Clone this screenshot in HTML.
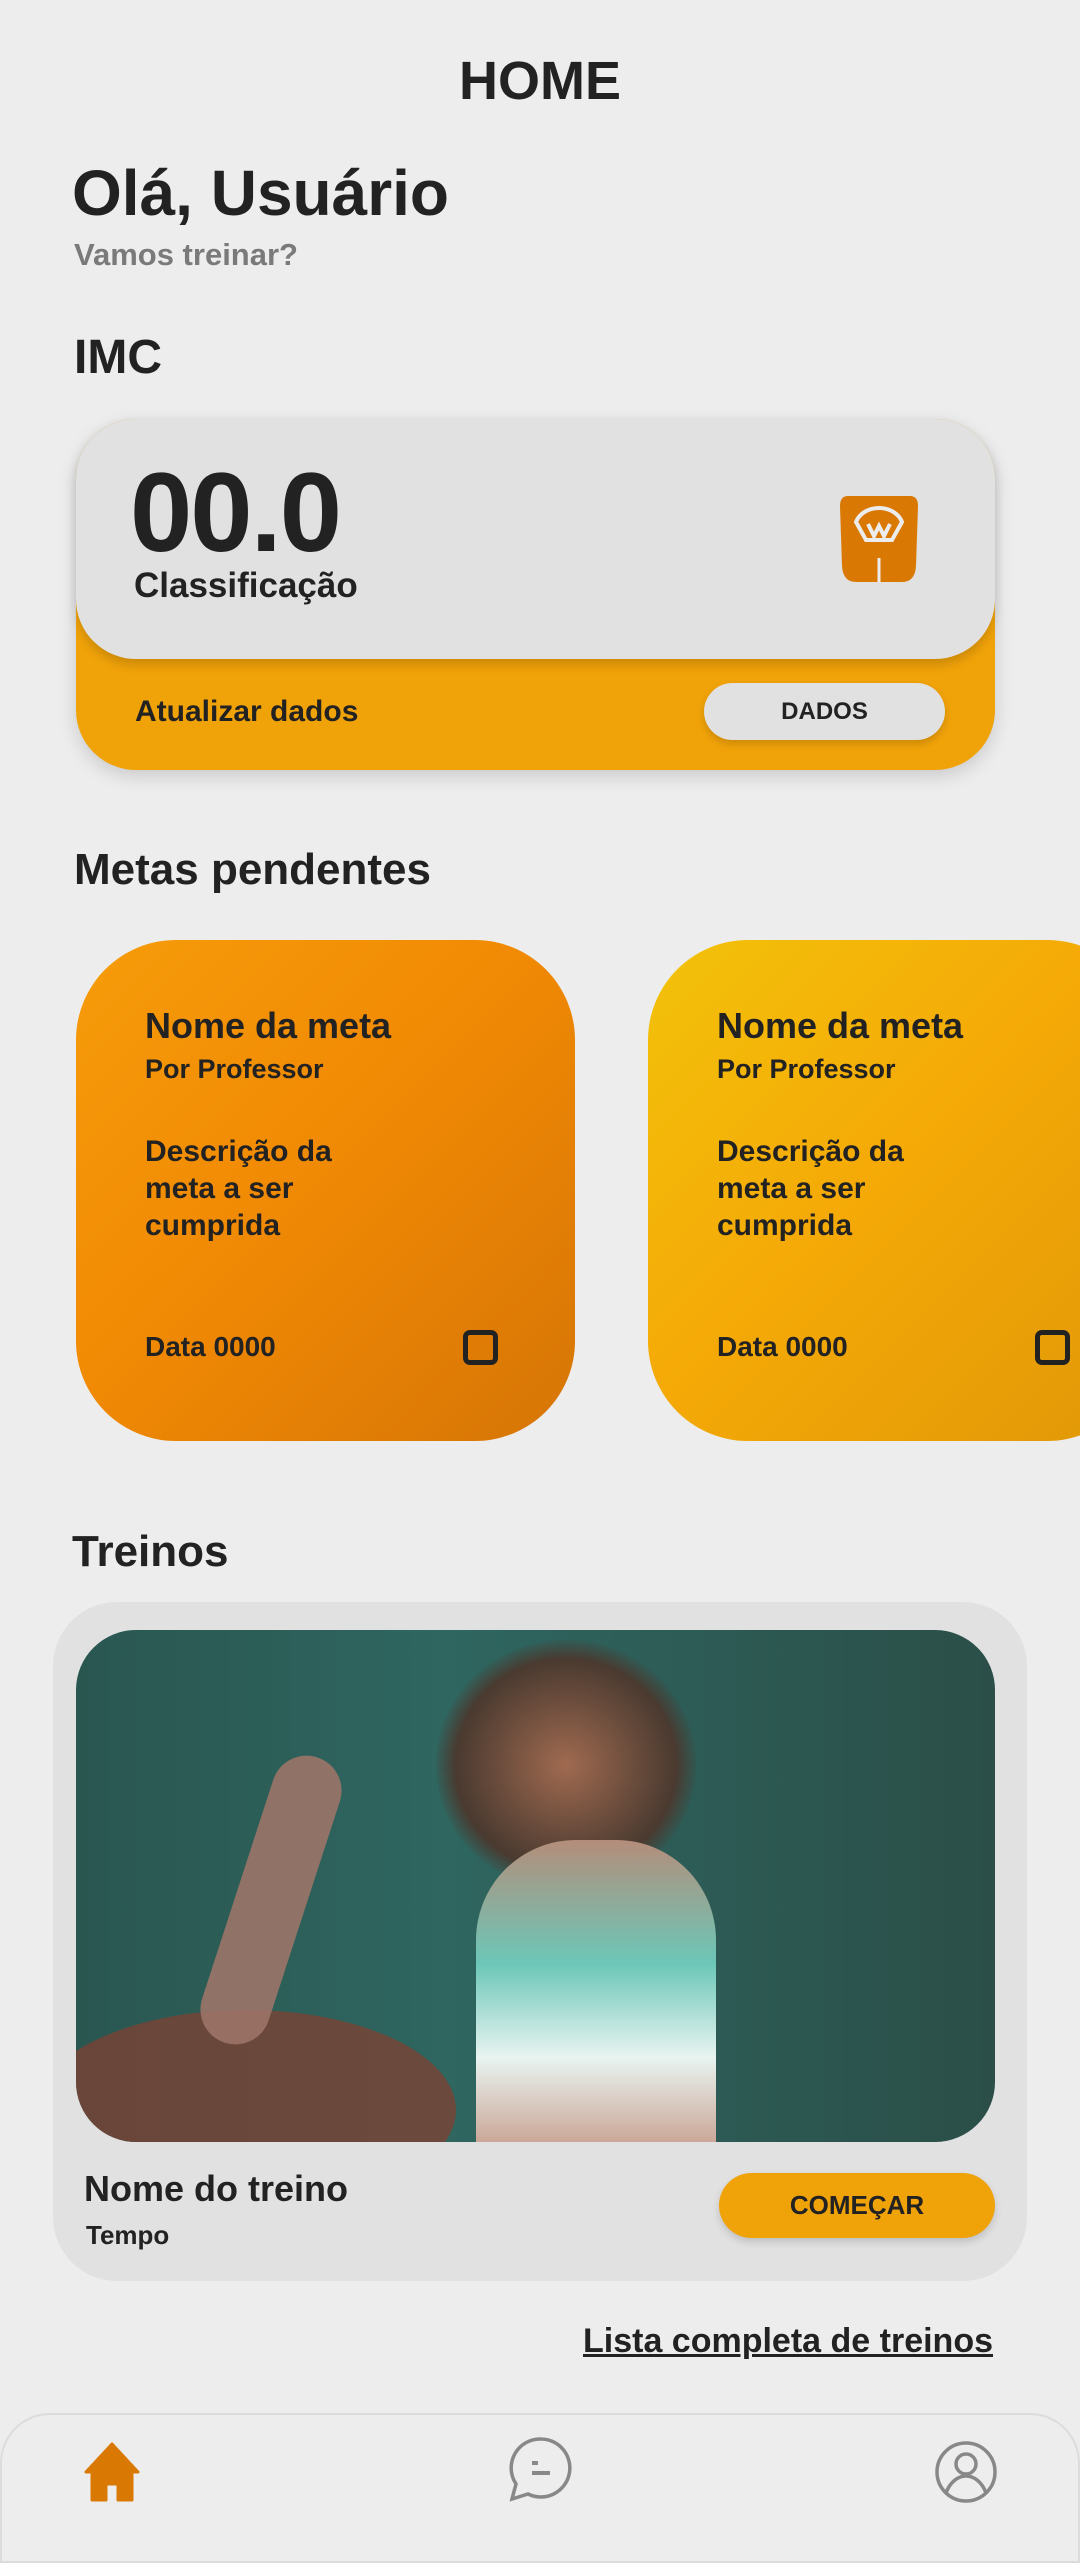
<!DOCTYPE html>
<html><head><meta charset="utf-8"><style>
*{margin:0;padding:0;box-sizing:border-box}
body{width:1080px;height:2529px;background:#ededed;font-family:"Liberation Sans",sans-serif;color:#222;position:relative;overflow:hidden}
.a{position:absolute;white-space:nowrap}
.b{font-weight:bold}
</style></head><body>
<div class="a b" style="left:0;width:1080px;text-align:center;top:50px;font-size:54px;">HOME</div>
<div class="a b" style="left:72px;top:156px;font-size:64px;">Olá, Usuário</div>
<div class="a b" style="left:74px;top:237px;font-size:31px;color:#7a7a7a">Vamos treinar?</div>
<div class="a b" style="left:74px;top:330px;font-size:48px;">IMC</div>

<div class="a" style="left:76px;top:419px;width:919px;height:351px;border-radius:60px;background:#f0a209;box-shadow:0 6px 18px rgba(0,0,0,.15)"></div>
<div class="a" style="left:76px;top:419px;width:919px;height:240px;border-radius:60px;background:#e1e1e1;box-shadow:0 6px 10px rgba(0,0,0,.15)"></div>
<div class="a b" style="left:130px;top:448px;font-size:112px;letter-spacing:-2px">00.0</div>
<div class="a b" style="left:134px;top:566px;font-size:35px;">Classificação</div>
<svg class="a" style="left:838px;top:496px" width="82" height="86" viewBox="0 0 82 86">
<path d="M10 0H72Q80 0 80 10L78 70Q77 86 64 86H18Q5 86 4 70L2 10Q2 0 10 0Z" fill="#d97904"/>
<path d="M41 12C30 12 21 18 18 26L28 44H54L64 26C61 18 52 12 41 12Z" fill="none" stroke="#ececec" stroke-width="4"/>
<path d="M30 28L36 40L41 30L46 40L52 28" fill="none" stroke="#ececec" stroke-width="4"/>
<path d="M41 62V86" stroke="#ececec" stroke-width="3"/>
</svg>
<div class="a b" style="left:135px;top:695px;font-size:30px;">Atualizar dados</div>
<div class="a b" style="left:704px;top:683px;width:241px;height:57px;border-radius:29px;background:#e1e1e1;text-align:center;line-height:57px;font-size:24px;box-shadow:0 4px 8px rgba(0,0,0,.15)">DADOS</div>

<div class="a b" style="left:74px;top:845px;font-size:44px;">Metas pendentes</div>

<div class="a" style="left:76px;top:940px;width:499px;height:501px;border-radius:100px;background:linear-gradient(135deg,#f69c0a,#f18a04 45%,#d67506)"></div>
<div class="a" style="left:648px;top:940px;width:499px;height:501px;border-radius:100px;background:linear-gradient(135deg,#f2c20a,#f5aa07 45%,#e09707)"></div>
<div class="a" style="left:145px;top:1005px;font-size:36px;" ><b>Nome da meta</b></div>
<div class="a b" style="left:145px;top:1054px;font-size:27px;">Por Professor</div>
<div class="a b" style="left:145px;top:1133px;font-size:30px;line-height:37px;">Descrição da<br>meta a ser<br>cumprida</div>
<div class="a b" style="left:145px;top:1331px;font-size:28px;">Data 0000</div>
<div class="a" style="left:463px;top:1330px;width:35px;height:35px;border:5px solid #222;border-radius:7px"></div>
<div class="a" style="left:717px;top:1005px;font-size:36px;"><b>Nome da meta</b></div>
<div class="a b" style="left:717px;top:1054px;font-size:27px;">Por Professor</div>
<div class="a b" style="left:717px;top:1133px;font-size:30px;line-height:37px;">Descrição da<br>meta a ser<br>cumprida</div>
<div class="a b" style="left:717px;top:1331px;font-size:28px;">Data 0000</div>
<div class="a" style="left:1035px;top:1330px;width:35px;height:35px;border:5px solid #222;border-radius:7px"></div>

<div class="a b" style="left:72px;top:1527px;font-size:44px;">Treinos</div>
<div class="a" style="left:53px;top:1602px;width:974px;height:679px;border-radius:64px;background:#e1e1e1"></div>
<div class="a" style="left:76px;top:1630px;width:919px;height:512px;border-radius:60px;overflow:hidden;background:linear-gradient(90deg,#2a5650,#2f6660 40%,#2b4e48)">
<div class="a" style="left:360px;top:10px;width:260px;height:250px;border-radius:50%;background:radial-gradient(#a06a50,#4a3a30 60%,transparent 72%)"></div>
<div class="a" style="left:400px;top:210px;width:240px;height:310px;border-radius:100px 100px 0 0;background:linear-gradient(180deg,#b48d7a,#6cc7b8 40%,#e8f4f1 70%,#c8a090)"></div>
<div class="a" style="left:-40px;top:380px;width:420px;height:200px;border-radius:50%;background:#7a4234;opacity:.8"></div>
<div class="a" style="left:160px;top:120px;width:70px;height:300px;transform:rotate(18deg);border-radius:35px;background:#9c7468;opacity:.9"></div>
</div>
<div class="a b" style="left:84px;top:2168px;font-size:36px;">Nome do treino</div>
<div class="a b" style="left:86px;top:2220px;font-size:26px;">Tempo</div>
<div class="a b" style="left:719px;top:2173px;width:276px;height:65px;border-radius:33px;background:#f0a209;text-align:center;line-height:65px;font-size:26px;box-shadow:0 4px 8px rgba(0,0,0,.15)">COMEÇAR</div>
<div class="a b" style="right:87px;top:2322px;font-size:34px;text-decoration:underline">Lista completa de treinos</div>

<div class="a" style="left:0;top:2413px;width:1080px;height:150px;border:2px solid #dcdcdc;border-radius:50px 50px 0 0;background:#ededed"></div>
<svg class="a" style="left:82px;top:2442px" width="60" height="60" viewBox="0 0 60 60"><path d="M30 2L4 30H10V58H24V42H36V58H50V30H56Z" fill="#d97904" stroke="#d97904" stroke-width="3" stroke-linejoin="round"/></svg>
<svg class="a" style="left:508px;top:2436px" width="66" height="66" viewBox="0 0 66 66"><path d="M33 3A29 29 0 1 1 20 58L4 63L8 48A29 29 0 0 1 33 3Z" fill="none" stroke="#888" stroke-width="3.5"/><path d="M24 27H30M24 37H42" stroke="#888" stroke-width="4"/></svg>
<svg class="a" style="left:934px;top:2440px" width="64" height="64" viewBox="0 0 64 64"><circle cx="32" cy="32" r="29" fill="none" stroke="#888" stroke-width="3.5"/><circle cx="32" cy="24" r="10" fill="none" stroke="#888" stroke-width="3.5"/><path d="M12 53C16 42 24 36 32 36S48 42 52 53" fill="none" stroke="#888" stroke-width="3.5"/></svg>
</body></html>
